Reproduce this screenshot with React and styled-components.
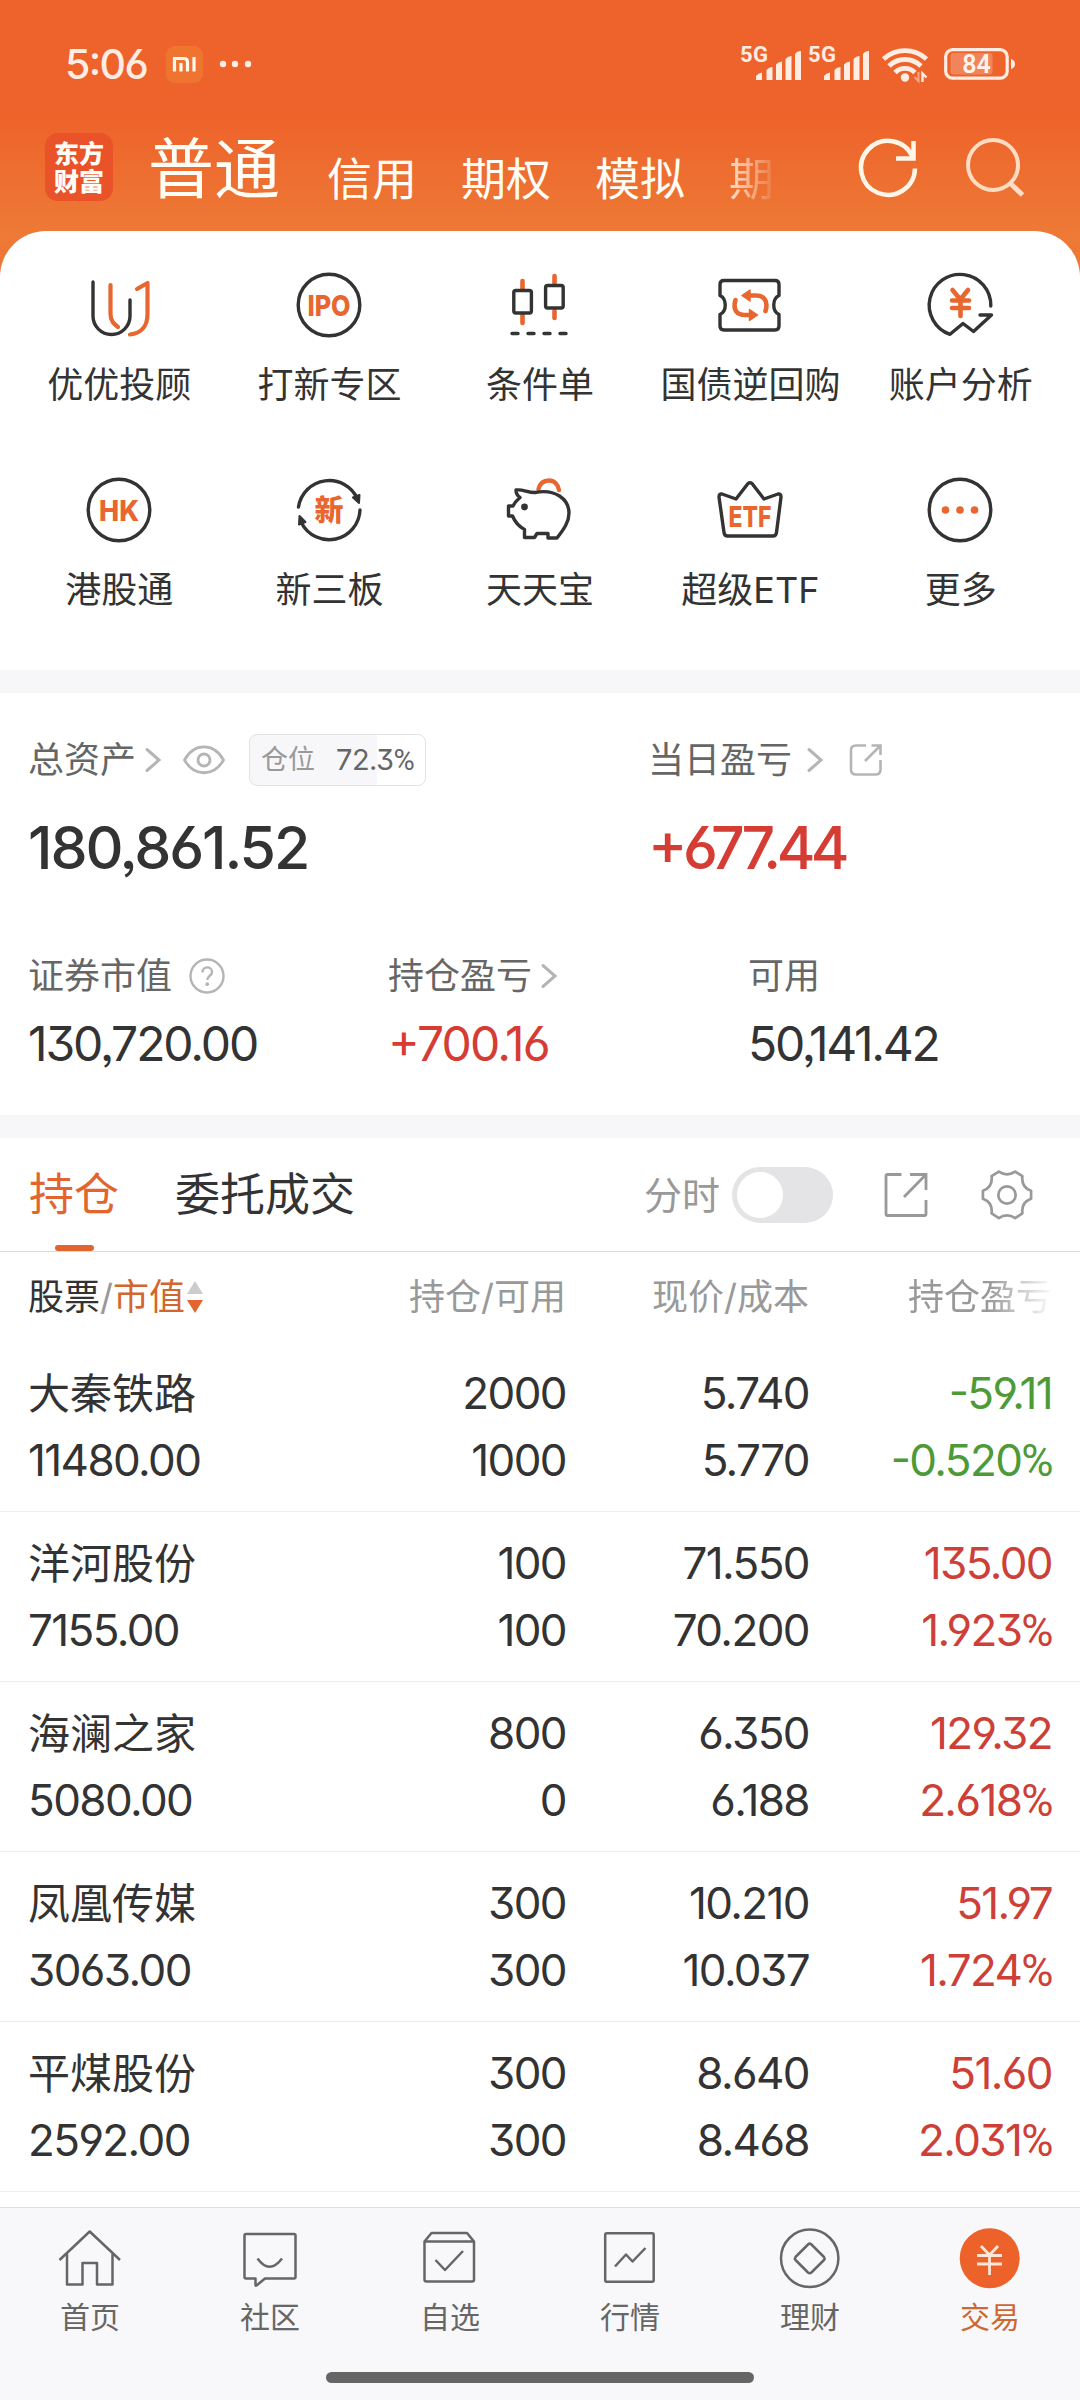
import React from 'react';
import styled, { createGlobalStyle } from 'styled-components';

const GlobalStyle = createGlobalStyle`
    * {
        box-sizing: border-box;
    }
    body {
        margin: 0;
        background: #fff;
        font-family: Inter, 'Noto Sans CJK SC', sans-serif;
        font-feature-settings: 'cv03', 'cv04', 'cv09', 'ss03', 'case';
        color: #333;
    }
    svg {
        display: block;
        flex: none;
        overflow: visible;
    }
`;

const Screen = styled.div`
    width: 1080px;
    height: 2400px;
    display: flex;
    flex-direction: column;
    overflow: hidden;
    white-space: nowrap;
    background: #fff;
`;

/* ---------- header ---------- */

const Header = styled.header`
    height: 280px;
    flex: none;
    background: linear-gradient(#ee632b 0, #ee632b 118px, #ed7a36 235px, #ed7434 280px);
    color: #fffdf5;
`;

const StatusBar = styled.div`
    height: 128px;
    padding: 0 64px 0 65px;
    display: flex;
    justify-content: space-between;
    color: #ffece2;
`;

const StatusGroup = styled.div`
    display: flex;
    align-items: center;
    gap: ${(p) => p.$gap || 0}px;
`;

const Clock = styled.span`
    width: 86px;
    font-size: 41px;
    font-weight: 500;
    letter-spacing: -1.6px;
`;

const NavRow = styled.div`
    height: 103px;
    padding-left: 45px;
    display: flex;
    align-items: flex-start;
`;

const Logo = styled.div`
    width: 68px;
    height: 68px;
    margin-top: 5px;
    padding-top: 5px;
    border-radius: 13px;
    background: #ea522a;
    font: 900 25px/28px 'Noto Sans CJK SC', sans-serif;
    text-align: center;
    white-space: normal;
`;

const AccountTabs = styled.nav`
    width: 710px;
    height: 102px;
    margin-left: 35px;
    display: flex;
    align-items: flex-start;
`;

const AccountTab = styled.span`
    margin-right: ${(p) => (p.$active ? 47 : 44)}px;
    font-size: ${(p) => (p.$active ? 66 : 45)}px;
    line-height: ${(p) => (p.$active ? 82 : 103)}px;
    ${(p) =>
        p.$faded &&
        `
        width: 45px;
        color: transparent;
        background: linear-gradient(90deg, #ffe0c8, #ee7a42);
        background-clip: text;
    `}
`;

const HeaderActions = styled.div`
    display: flex;
    margin: 7px 0 0 -3px;
    gap: 40px;
`;

/* ---------- shortcuts ---------- */

const Sheet = styled.section`
    height: 439px;
    flex: none;
    margin-top: -49px;
    padding: 38px 14px 0;
    display: grid;
    grid-template-columns: repeat(5, 1fr);
    grid-auto-rows: 205px;
    border-radius: 46px 46px 0 0;
    background: #fff;
`;

const Shortcut = styled.div`
    display: flex;
    flex-direction: column;
    align-items: center;
    font-size: 36px;
    line-height: 52px;

    svg {
        margin: 0 1px 18px 0;
    }
`;

const Band = styled.div`
    height: 23px;
    flex: none;
    background: #f7f7fa;
`;

/* ---------- assets ---------- */

const Assets = styled.section`
    height: 422px;
    flex: none;
    padding: 41px 0 0 28px;
    color: #333;
`;

const AssetRow = styled.div`
    display: grid;
    grid-template-columns: ${(p) => p.$columns};
    margin-bottom: ${(p) => p.$gap || 0}px;
`;

const AssetLabel = styled.div`
    height: 52px;
    display: flex;
    align-items: center;
    font-size: 36px;
    line-height: 50px;
    color: #666;
`;

const AssetValue = styled.div`
    margin-top: ${(p) => (p.$big ? 32 : 16)}px;
    font-size: ${(p) => (p.$big ? 59 : 48)}px;
    line-height: ${(p) => (p.$big ? 60 : 52)}px;
    font-weight: ${(p) => (p.$big ? 500 : 400)};
    letter-spacing: ${(p) => p.$spacing}px;
    color: ${(p) => (p.$up ? '#d43c34' : '#333')};
`;

const PositionPill = styled.div`
    width: 177px;
    height: 52px;
    margin-left: 24px;
    padding: 0 11px 0 11px;
    display: flex;
    align-items: center;
    justify-content: space-between;
    border: 1px solid #e3e3e5;
    border-radius: 8px;
    background: linear-gradient(90deg, #f7f7fa 72.3%, #fff 72.3%);
    font-size: 27px;
    color: #999;

    b {
        font-size: 29px;
        font-weight: 400;
        letter-spacing: -0.6px;
        color: #666;
    }
`;

const Percent = styled.span`
    font-family: Roboto, sans-serif;
`;

/* ---------- holdings ---------- */

const HoldingTabs = styled.div`
    height: 114px;
    flex: none;
    padding: 0 47px 0 29px;
    display: flex;
    align-items: center;
    border-bottom: 1px solid #dcdcde;
`;

const HoldingTab = styled.div`
    height: 113px;
    margin-right: 56px;
    display: flex;
    flex-direction: column;
    align-items: center;
    font-size: 45px;
    line-height: 113px;
    color: ${(p) => (p.$active ? '#e2652f' : '#333')};

    &::after {
        content: '';
        width: 39px;
        height: 6px;
        margin-top: -6px;
        border-radius: 3px;
        background: ${(p) => (p.$active ? '#e2652f' : 'transparent')};
    }
`;

const SwitchLabel = styled.span`
    margin-left: auto;
    font-size: 38px;
    line-height: 110px;
    color: #999;
`;

const Toggle = styled.div`
    width: 101px;
    height: 56px;
    margin: 0 48px 0 12px;
    padding: 5px;
    border-radius: 28px;
    background: #e4e4e6;

    &::before {
        content: '';
        display: block;
        width: 46px;
        height: 46px;
        border-radius: 50%;
        background: #fff;
    }
`;

const TableRow = styled.div`
    display: grid;
    grid-template-columns: 277px 261px 243px 243px;
    padding-left: 28px;
    flex: none;
`;

const TableHead = styled(TableRow)`
    height: 90px;
    line-height: 90px;
    font-size: 36px;
    color: #999;
`;

const HeadCell = styled.div`
    display: flex;
    justify-content: ${(p) => (p.$left ? 'flex-start' : 'flex-end')};
    align-items: center;
    ${(p) => p.$faded && 'mask-image: linear-gradient(90deg, #000 74%, transparent 101%);'}

    em {
        font-style: normal;
        color: #333;
    }
    i {
        font-style: normal;
        color: #d3652f;
    }
`;

const HoldingRow = styled(TableRow)`
    height: 170px;
    padding-top: 18px;
    border-bottom: 1px solid #ececee;
`;

const Cell = styled.div`
    display: flex;
    flex-direction: column;
    align-items: ${(p) => (p.$left ? 'flex-start' : 'flex-end')};
    font-size: 44px;
    line-height: 67px;
    letter-spacing: -1.6px;
    color: ${(p) => p.$color || '#333'};
`;

const StockName = styled.span`
    font-size: 42px;
    letter-spacing: 0;
`;

/* ---------- bottom bar ---------- */

const BottomBar = styled.footer`
    height: 193px;
    flex: none;
    margin-top: 15px;
    border-top: 1px solid #dfdfe2;
    background: #f8f8fa;
    display: flex;
    flex-direction: column;
    align-items: center;
`;

const BottomTabs = styled.div`
    width: 100%;
    height: 164px;
    display: grid;
    grid-template-columns: repeat(6, 1fr);
    padding-top: 18px;
`;

const BottomTab = styled.div`
    display: flex;
    flex-direction: column;
    align-items: center;
    font-size: 30px;
    line-height: 54px;
    color: ${(p) => (p.$active ? '#cf6733' : '#666')};
`;

const HomeBar = styled.div`
    width: 428px;
    height: 11px;
    border-radius: 6px;
    background: #666;
`;

/* ---------- icons ---------- */

const DARK = '#333';
const ORANGE = '#e8662f';

const ShortcutSvg = ({ children }) => (
    <svg width="72" height="72" viewBox="0 0 72 72" fill="none" stroke={DARK} strokeWidth="3.4" strokeLinecap="round" strokeLinejoin="round">
        {children}
    </svg>
);

const BadgeText = styled.text`
    font-family: Inter, 'Noto Sans CJK SC', sans-serif;
    font-weight: 800;
    fill: ${ORANGE};
    stroke: none;
    text-anchor: middle;
`;

const AdvisorIcon = () => (
    <ShortcutSvg>
        <path d="M10 13V47A18.5 18.5 0 0 0 47 47V31" />
        <g stroke={ORANGE} strokeWidth="4.2">
            <path d="M27.5 16V45C27.5 52 31 55 35 58" />
            <path d="M54 20L64.5 14V45C64.5 57 58 64.5 47 65.5" />
        </g>
    </ShortcutSvg>
);

const IpoIcon = () => (
    <ShortcutSvg>
        <circle cx="36" cy="36" r="30.8" />
        <BadgeText x="36" y="46.5" fontSize="29" textLength="43" lengthAdjust="spacingAndGlyphs">IPO</BadgeText>
    </ShortcutSvg>
);

const CandleIcon = () => (
    <ShortcutSvg>
        <path d="M19.5 12V20M19.5 46V54M51.5 7V14M51.5 42V49" stroke={ORANGE} strokeWidth="4.6" />
        <rect x="10.8" y="21.5" width="17.6" height="22.5" rx="2" />
        <rect x="42.6" y="16.5" width="17.6" height="22.5" rx="2" />
        <path d="M9 64.5H15M25 64.5H31M41 64.5H47M57 64.5H63" />
    </ShortcutSvg>
);

const RepoIcon = () => (
    <ShortcutSvg>
        <path d="M10 11.5H61Q65 11.5 65 15.5V26.5C58 30 58 42 65 45.5V57Q65 61 61 61H10Q6 61 6 57V45.5C13 42 13 30 6 26.5V15.5Q6 11.5 10 11.5Z" />
        <g stroke={ORANGE} strokeWidth="4.6">
            <path d="M51.5 42C54.5 32 50 26.5 42 26.5H36" />
            <path d="M21.5 31C18.5 41 23 46 31 46H35" />
        </g>
        <path d="M28 26.5L36 21V32ZM43.5 46L35.5 40.5V51.5Z" fill={ORANGE} stroke={ORANGE} strokeWidth="1.5" />
    </ShortcutSvg>
);

const AnalysisIcon = () => (
    <ShortcutSvg>
        <path d="M66.8 37A30.8 30.8 0 1 0 26 65.3L39 54.5L49.5 62.5L67.5 46H56" />
        <path d="M28.5 21L36.3 30.5L44 21M28 31.5H45M28 39H45M36.5 31V47" stroke={ORANGE} strokeWidth="4.6" />
    </ShortcutSvg>
);

const HkIcon = () => (
    <ShortcutSvg>
        <circle cx="36" cy="36" r="30.8" />
        <BadgeText x="36" y="46.5" fontSize="29" textLength="40" lengthAdjust="spacingAndGlyphs">HK</BadgeText>
    </ShortcutSvg>
);

const NewBoardIcon = () => (
    <ShortcutSvg>
        <path d="M5.5 33A31 31 0 0 1 64.5 25M67 36A31 31 0 0 1 8.5 49" />
        <path d="M60 23.5L66.5 21L66 29ZM6.5 42L6 50.5L12.5 48Z" fill={DARK} strokeWidth="2" />
        <BadgeText x="36" y="46.5" fontSize="29">新</BadgeText>
    </ShortcutSvg>
);

const PiggyIcon = () => (
    <ShortcutSvg>
        <path d="M35.5 15C37 9 41 6.5 46 6.5S55 10 56 16" stroke={ORANGE} strokeWidth="4.4" />
        <path d="M13 16C20 15 24 18.5 32 18.5C52 14.5 66 25 66 39C66 48 61 55 54 64H45V59.5H34L31.5 63.5H21.5V55.5C15 52 12 48 9.5 42H5.5V32H10C12 28 14 26 17 23.5C14 21.5 13 19 13 16Z" />
        <circle cx="21.5" cy="33" r="3.4" fill={DARK} stroke="none" />
    </ShortcutSvg>
);

const CrownIcon = () => (
    <ShortcutSvg>
        <path d="M34 9.5Q36 8 38 9.5L50 25L64 20Q67 19.5 67 23L62.5 58.5Q62 62 59 62H13.5Q10.5 62 10 58.5L5 23Q5 19.5 8 20L22 25Z" />
        <BadgeText x="36" y="53" fontSize="29" textLength="43" lengthAdjust="spacingAndGlyphs">ETF</BadgeText>
    </ShortcutSvg>
);

const MoreIcon = () => (
    <ShortcutSvg>
        <circle cx="36" cy="36" r="30.8" />
        <g fill={ORANGE} stroke="none">
            <circle cx="21.5" cy="36" r="3.8" />
            <circle cx="36" cy="36" r="3.8" />
            <circle cx="50.5" cy="36" r="3.8" />
        </g>
    </ShortcutSvg>
);

const MiBadge = () => (
    <svg width="37" height="37" viewBox="0 0 37 37">
        <rect width="37" height="37" rx="9" fill="#ee7430" />
        <path d="M8.5 25.5V12.5H18Q21.5 12.5 21.5 16V25.5M15 17V25.5M28 11V25.5" fill="none" stroke="#fff6ee" strokeWidth="3.2" />
    </svg>
);

const StatusDots = () => (
    <svg width="36" height="8" viewBox="0 0 36 8" fill="#ffece2">
        <circle cx="5" cy="4" r="3.2" />
        <circle cx="17" cy="4" r="3.2" />
        <circle cx="30" cy="4" r="3.2" />
    </svg>
);

const SignalIcon = () => (
    <svg width="68" height="36" viewBox="0 0 68 36" fill="#ffece2">
        <text x="0" y="16" fontSize="22" fontWeight="700" textLength="28" fontFamily="Roboto, sans-serif">5G</text>
        <path d="M16 34V30Q18 27 22 26.5V34ZM26.5 34V24Q29 21 32.5 21V34ZM36 34V18.5Q38 16 42 15.5V34ZM45.5 34V13Q48 10 51.5 10V34ZM55 34V8Q57 5 61 5V34Z" />
    </svg>
);

const WifiIcon = () => (
    <svg width="48" height="38" viewBox="0 0 48 38" fill="none" stroke="#ffece2" strokeWidth="4.8">
        <path d="M1.5 14A32 32 0 0 1 44.5 14M7 21A23 23 0 0 1 39 21M13 27.5A14 14 0 0 1 33 27.5" />
        <circle cx="23" cy="32.5" r="4.2" fill="#ffece2" stroke="none" />
        <path d="M36.5 27V36L32.5 32" strokeWidth="2" opacity="0.5" />
        <path d="M40.5 37V28.5L44.5 32.5" strokeWidth="2.4" />
    </svg>
);

const BatteryIcon = () => (
    <svg width="72" height="32" viewBox="0 0 72 32">
        <rect x="1.7" y="1.7" width="61.5" height="28.5" rx="7" fill="none" stroke="#ffece2" strokeWidth="3.2" />
        <rect x="6.5" y="5" width="42" height="21.5" rx="3" fill="#f2845a" />
        <path d="M67 11Q71 12 71 16T67 21Z" fill="#ffece2" />
        <text x="32.5" y="24.5" fontSize="25" fontWeight="600" textAnchor="middle" fill="#fff3ea" fontFamily="Roboto, sans-serif">84</text>
    </svg>
);

const RefreshIcon = () => (
    <svg width="66" height="66" viewBox="0 0 66 66" fill="none" stroke="#fff6e8" strokeWidth="4.5">
        <path d="M60 33.5A27 27 0 1 1 57.5 21.5" />
        <path d="M58.5 6V23.5H41" />
    </svg>
);

const SearchIcon = () => (
    <svg width="66" height="66" viewBox="0 0 66 66" fill="none" stroke="#ffdcc2" strokeWidth="4">
        <circle cx="32" cy="30" r="25" />
        <path d="M49 48L61.5 60" strokeWidth="5" />
    </svg>
);

const Chevron = styled.svg.attrs({ viewBox: '0 0 16 26', children: <path d="M2 2.5L14 13L2 23.5" /> })`
    width: 16px;
    height: 26px;
    margin-left: ${(p) => p.$ml}px;
    fill: none;
    stroke: #b5b5b5;
    stroke-width: 3;
    stroke-linecap: round;
`;

const EyeIcon = styled.svg.attrs({
    viewBox: '0 0 42 30',
    children: (
        <>
            <path d="M1.5 15C11 -2.5 31 -2.5 40.5 15C31 32 11 32 1.5 15Z" />
            <circle cx="21" cy="15" r="6" />
        </>
    ),
})`
    width: 42px;
    height: 30px;
    margin-left: 22px;
    fill: none;
    stroke: #b5b5b5;
    stroke-width: 2.8;
`;

const HelpIcon = () => (
    <svg width="54" height="38" viewBox="0 0 54 38">
        <circle cx="35" cy="19" r="16.5" fill="none" stroke="#b5b5b5" strokeWidth="2.4" />
        <path d="M30.5 15.5C30.5 8.5 40 9 40 15C40 19 35.2 19 35.2 23" fill="none" stroke="#b5b5b5" strokeWidth="2.4" />
        <circle cx="35.2" cy="27.2" r="1.9" fill="#b5b5b5" />
    </svg>
);

const ShareIcon = () => (
    <svg width="60" height="34" viewBox="0 0 60 34" fill="none" stroke="#b5b5b5" strokeWidth="2.6">
        <path d="M43 2.5H33Q28 2.5 28 7.5V26.5Q28 31.5 33 31.5H52.5Q57.5 31.5 57.5 26.5V17" />
        <path d="M48.5 2.5H57.5V12M57 3L42 18" />
    </svg>
);

const ExportIcon = () => (
    <svg width="50" height="50" viewBox="0 0 50 50" fill="none" stroke="#999" strokeWidth="2.8">
        <path d="M20.5 4.5H6.5Q5 4.5 5 6V44Q5 45.5 6.5 45.5H43.5Q45 45.5 45 44V30" />
        <path d="M29 4.5H45V20M44.5 5L23 27" />
    </svg>
);

const GearIcon = styled.svg.attrs({
    viewBox: '0 0 54 54',
    children: (
        <>
            <path d="M18.5 2.8Q27 8.5 35.5 2.8L43 7.5Q41.5 19 52 22.5V31Q41.5 35 43 46L35.5 51Q27 45.5 18.5 51L11 46Q12.5 35 2 31V22.5Q12.5 19 11 7.5Z" />
            <circle cx="27" cy="27" r="9" />
        </>
    ),
})`
    width: 52px;
    height: 52px;
    margin-left: 50px;
    fill: none;
    stroke: #999;
    stroke-width: 2.8;
    stroke-linejoin: round;
`;

const SortIcon = () => (
    <svg width="19" height="34" viewBox="0 0 19 34">
        <path d="M2 14H18L10 1Z" fill="#ccc" />
        <path d="M2 20H18L10 33Z" fill="#e2652f" />
    </svg>
);

const TabSvg = ({ children }) => (
    <svg width="64" height="64" viewBox="0 0 64 64" fill="none" stroke="#666" strokeWidth="2.5" strokeLinejoin="round">
        {children}
    </svg>
);

const HomeIcon = () => (
    <TabSvg>
        <path d="M1.5 34L31.7 5.5L62 34M9 28V58.5H24.5V37H39V58.5H54.5V28" />
    </TabSvg>
);

const CommunityIcon = () => (
    <TabSvg>
        <path d="M8 8H56Q57.5 8 57.5 9.5V51Q57.5 52.5 56 52.5H27L18.5 59.5Q17.5 60 17.5 59V52.5H8Q6.5 52.5 6.5 51V9.5Q6.5 8 8 8Z" />
        <path d="M19.5 32.5Q31.5 49 44 32.5" />
    </TabSvg>
);

const WatchlistIcon = () => (
    <TabSvg>
        <path d="M6.5 15.5L13.5 7H49L56 15.5V53.5Q56 55.5 54 55.5H8.5Q6.5 55.5 6.5 53.5ZM6.5 15.5H56M17.5 34L27 44L45 25" />
    </TabSvg>
);

const MarketIcon = () => (
    <TabSvg>
        <rect x="7.2" y="7.2" width="48.5" height="48.5" rx="1.5" />
        <path d="M17 40.5L28 28.5L34.5 35.5L47.5 22" />
    </TabSvg>
);

const WealthIcon = () => (
    <TabSvg>
        <circle cx="31.7" cy="32.3" r="28.7" />
        <path d="M30 18.5Q31.7 16.8 33.4 18.5L46 31Q47.2 32.5 46 34L33.4 46.5Q31.7 48 30 46.5L17.5 34Q16.3 32.5 17.5 31Z" />
    </TabSvg>
);

const TradeIcon = () => (
    <TabSvg>
        <circle cx="31.7" cy="32.3" r="30" fill="#ec622a" stroke="none" />
        <path d="M23 20L31.5 29L40 20M19 29.5H44M19 38H44M31.5 29V49" stroke="#ffe6d6" strokeWidth="2.8" />
    </TabSvg>
);

/* ---------- data ---------- */

const shortcuts = [
    [AdvisorIcon, '优优投顾'],
    [IpoIcon, '打新专区'],
    [CandleIcon, '条件单'],
    [RepoIcon, '国债逆回购'],
    [AnalysisIcon, '账户分析'],
    [HkIcon, '港股通'],
    [NewBoardIcon, '新三板'],
    [PiggyIcon, '天天宝'],
    [CrownIcon, '超级ETF'],
    [MoreIcon, '更多'],
];

const holdings = [
    { name: '大秦铁路', value: '11480.00', held: '2000', usable: '1000', price: '5.740', cost: '5.770', profit: '-59.11', rate: '-0.520' },
    { name: '洋河股份', value: '7155.00', held: '100', usable: '100', price: '71.550', cost: '70.200', profit: '135.00', rate: '1.923' },
    { name: '海澜之家', value: '5080.00', held: '800', usable: '0', price: '6.350', cost: '6.188', profit: '129.32', rate: '2.618' },
    { name: '凤凰传媒', value: '3063.00', held: '300', usable: '300', price: '10.210', cost: '10.037', profit: '51.97', rate: '1.724' },
    { name: '平煤股份', value: '2592.00', held: '300', usable: '300', price: '8.640', cost: '8.468', profit: '51.60', rate: '2.031' },
];

const bottomTabs = [
    [HomeIcon, '首页'],
    [CommunityIcon, '社区'],
    [WatchlistIcon, '自选'],
    [MarketIcon, '行情'],
    [WealthIcon, '理财'],
    [TradeIcon, '交易'],
];

const Holding = ({ data }) => {
    const color = data.profit.startsWith('-') ? '#4d9a38' : '#cd4038';

    return (
        <HoldingRow>
            <Cell $left>
                <StockName>{data.name}</StockName>
                <span>{data.value}</span>
            </Cell>
            <Cell>
                <span>{data.held}</span>
                <span>{data.usable}</span>
            </Cell>
            <Cell>
                <span>{data.price}</span>
                <span>{data.cost}</span>
            </Cell>
            <Cell $color={color}>
                <span>{data.profit}</span>
                <span>{data.rate}<Percent>%</Percent></span>
            </Cell>
        </HoldingRow>
    );
};

const App = () => {
    return (
        <>
            <GlobalStyle />
            <Screen>
                <Header>
                    <StatusBar>
                        <StatusGroup $gap={15}>
                            <Clock>5:06</Clock>
                            <MiBadge />
                            <StatusDots />
                        </StatusGroup>
                        <StatusGroup $gap={6}>
                            <StatusGroup>
                                <SignalIcon />
                                <SignalIcon />
                            </StatusGroup>
                            <StatusGroup $gap={14}>
                                <WifiIcon />
                                <BatteryIcon />
                            </StatusGroup>
                        </StatusGroup>
                    </StatusBar>
                    <NavRow>
                        <Logo>东方<br />财富</Logo>
                        <AccountTabs>
                            <AccountTab $active>普通</AccountTab>
                            <AccountTab>信用</AccountTab>
                            <AccountTab>期权</AccountTab>
                            <AccountTab>模拟</AccountTab>
                            <AccountTab $faded>期</AccountTab>
                        </AccountTabs>
                        <HeaderActions>
                            <RefreshIcon />
                            <SearchIcon />
                        </HeaderActions>
                    </NavRow>
                </Header>

                <Sheet>
                    {shortcuts.map(([Icon, label]) => (
                        <Shortcut key={label}>
                            <Icon />
                            {label}
                        </Shortcut>
                    ))}
                </Sheet>
                <Band />

                <Assets>
                    <AssetRow $columns="620px 1fr" $gap={72}>
                        <div>
                            <AssetLabel>
                                总资产
                                <Chevron $ml={9} />
                                <EyeIcon />
                                <PositionPill>仓位<b>72.3<Percent>%</Percent></b></PositionPill>
                            </AssetLabel>
                            <AssetValue $big $spacing={-2.1}>180,861.52</AssetValue>
                        </div>
                        <div>
                            <AssetLabel>
                                当日盈亏
                                <Chevron $ml={15} />
                                <ShareIcon />
                            </AssetLabel>
                            <AssetValue $big $up $spacing={-4.5}>+677.44</AssetValue>
                        </div>
                    </AssetRow>
                    <AssetRow $columns="360px 360px 1fr">
                        <div>
                            <AssetLabel>证券市值<HelpIcon /></AssetLabel>
                            <AssetValue $spacing={-2.1}>130,720.00</AssetValue>
                        </div>
                        <div>
                            <AssetLabel>持仓盈亏<Chevron $ml={9} /></AssetLabel>
                            <AssetValue $up $spacing={-1.8}>+700.16</AssetValue>
                        </div>
                        <div>
                            <AssetLabel>可用</AssetLabel>
                            <AssetValue $spacing={-2.3}>50,141.42</AssetValue>
                        </div>
                    </AssetRow>
                </Assets>
                <Band />

                <HoldingTabs>
                    <HoldingTab $active>持仓</HoldingTab>
                    <HoldingTab>委托成交</HoldingTab>
                    <SwitchLabel>分时</SwitchLabel>
                    <Toggle />
                    <ExportIcon />
                    <GearIcon />
                </HoldingTabs>
                <TableHead>
                    <HeadCell $left><em>股票</em>/<i>市值</i><SortIcon /></HeadCell>
                    <HeadCell>持仓/可用</HeadCell>
                    <HeadCell>现价/成本</HeadCell>
                    <HeadCell $faded>持仓盈亏</HeadCell>
                </TableHead>
                {holdings.map((item) => (
                    <Holding key={item.name} data={item} />
                ))}

                <BottomBar>
                    <BottomTabs>
                        {bottomTabs.map(([Icon, label]) => (
                            <BottomTab key={label} $active={label === '交易'}>
                                <Icon />
                                {label}
                            </BottomTab>
                        ))}
                    </BottomTabs>
                    <HomeBar />
                </BottomBar>
            </Screen>
        </>
    );
};

export default App;
